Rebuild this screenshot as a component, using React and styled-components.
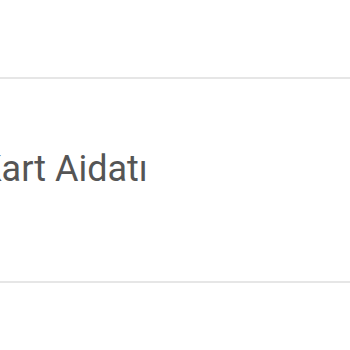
import React from 'react'
import styled, { createGlobalStyle } from 'styled-components'

const Global = createGlobalStyle`
  html, body {
    margin: 0;
    padding: 0;
    background: #fff;
    overflow: hidden;
  }
`

const List = styled.div`
  display: flex;
  flex-direction: column;
  width: 350px;
  height: 350px;
  overflow: hidden;
`

const Row = styled.div`
  display: flex;
  align-items: center;
  flex: 0 0 ${p => p.h}px;
  box-sizing: border-box;
  padding-bottom: ${p => p.pb || 0}px;
  border-bottom: ${p => (p.last ? 'none' : '2px solid #e6e6e6')};
`

const Label = styled.span`
  font-family: Roboto, "Liberation Sans", sans-serif;
  font-size: 36px;
  color: #555555;
  margin-left: -21px;
  white-space: nowrap;
`

export default function App() {
  return (
    <>
      <Global />
      <List>
        <Row h={79} />
        <Row h={204} pb={22}>
          <Label>Kart Aidatı</Label>
        </Row>
        <Row h={67} last />
      </List>
    </>
  )
}
